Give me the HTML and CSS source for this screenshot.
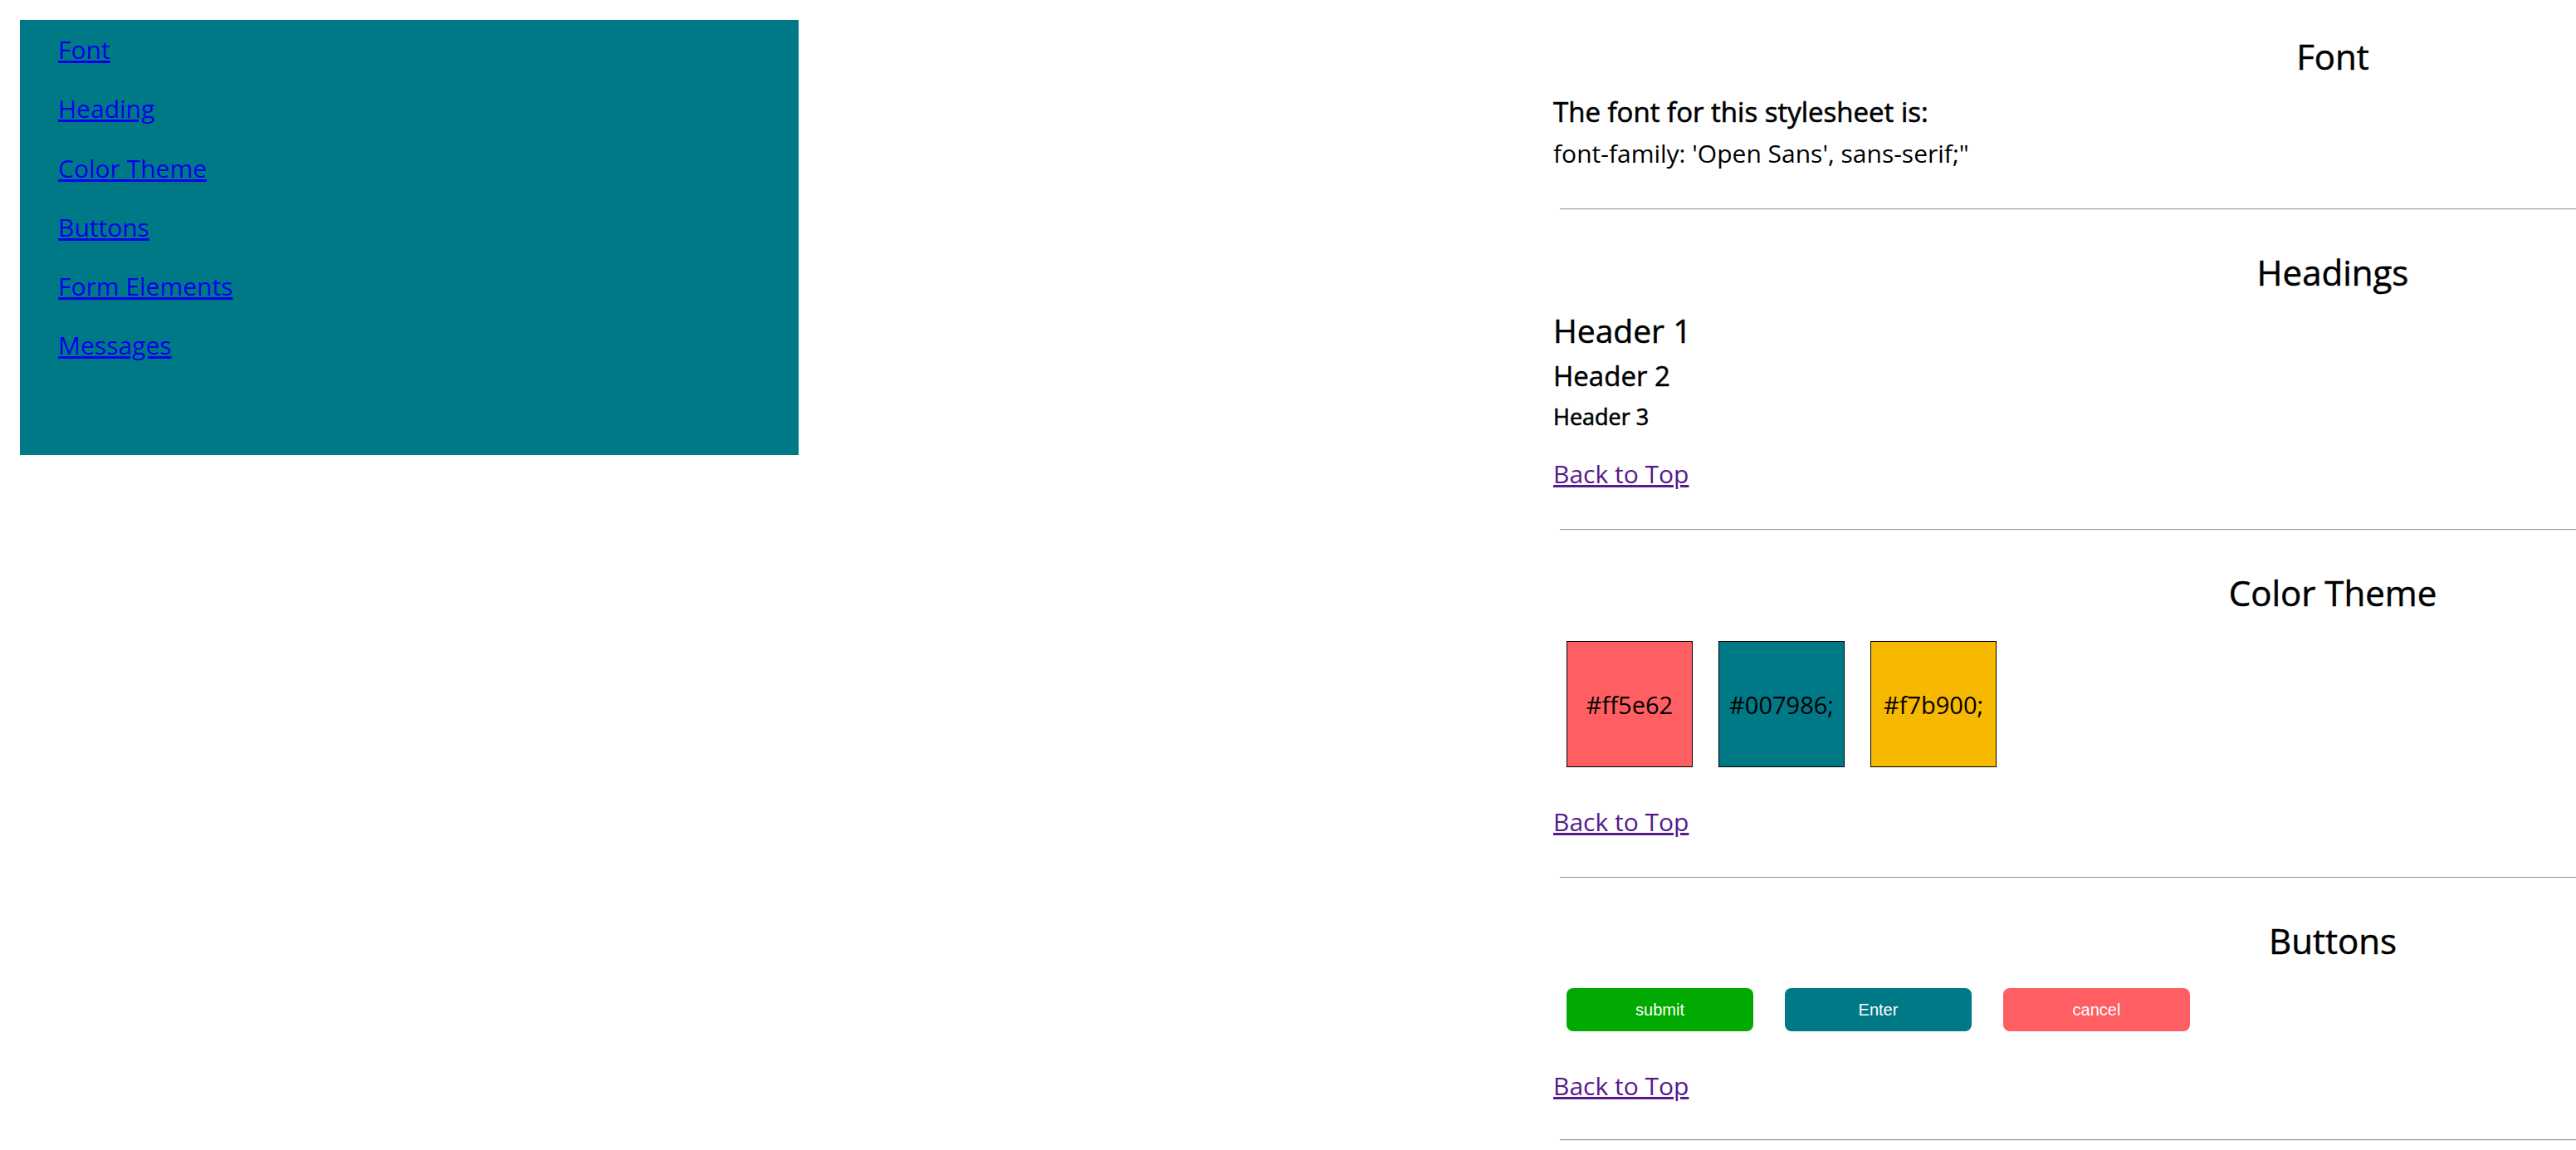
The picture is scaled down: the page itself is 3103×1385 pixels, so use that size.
FILE: index.html
```html
<!DOCTYPE html>
<html lang="en">
<head>
<meta charset="utf-8">
<title>Style Guide</title>
<link rel="stylesheet" href="styles.css">
</head>
<body>
<div class="page">
  <nav class="sidebar">
    <ul class="nav-list">
      <li><a class="nav-link" href="#font">Font</a></li>
      <li><a class="nav-link" href="#headings">Heading</a></li>
      <li><a class="nav-link" href="#colors">Color Theme</a></li>
      <li><a class="nav-link" href="#buttons">Buttons</a></li>
      <li><a class="nav-link" href="#forms">Form Elements</a></li>
      <li><a class="nav-link" href="#messages">Messages</a></li>
    </ul>
  </nav>
  <main class="content">
    <section class="section section-font" id="font">
      <h2 class="section-title">Font</h2>
      <h3 class="font-lead">The font for this stylesheet is:</h3>
      <p class="font-desc">font-family: 'Open Sans', sans-serif;"</p>
      <hr class="divider">
    </section>

    <section class="section" id="headings">
      <h2 class="section-title">Headings</h2>
      <h1 class="sample-h1">Header 1</h1>
      <h2 class="sample-h2">Header 2</h2>
      <h3 class="sample-h3">Header 3</h3>
      <a class="back-link" href="#top">Back to Top</a>
      <hr class="divider">
    </section>

    <section class="section" id="colors">
      <h2 class="section-title">Color Theme</h2>
      <div class="swatches">
        <div class="swatch swatch-red">#ff5e62</div>
        <div class="swatch swatch-teal">#007986;</div>
        <div class="swatch swatch-yellow">#f7b900;</div>
      </div>
      <a class="back-link back-after-block" href="#top">Back to Top</a>
      <hr class="divider">
    </section>

    <section class="section" id="buttons">
      <h2 class="section-title">Buttons</h2>
      <div class="button-row">
        <button class="btn btn-submit" type="button">submit</button>
        <button class="btn btn-enter" type="button">Enter</button>
        <button class="btn btn-cancel" type="button">cancel</button>
      </div>
      <a class="back-link back-after-block" href="#top">Back to Top</a>
      <hr class="divider divider-last">
    </section>
  </main>
</div>
</body>
</html>
```

FILE: styles.css
```css
html {
  overflow: hidden;
}

body {
  margin: 0;
  font-family: "Open Sans", "Noto Sans", sans-serif;
  color: #000;
  background: #fff;
}

.page {
  display: flex;
  align-items: flex-start;
  padding: 24px 0 0 24px;
  gap: 909px;
}

.sidebar {
  flex: 0 0 938px;
  width: 938px;
  height: 524px;
  background: #007986;
  box-sizing: border-box;
  padding-left: 46px;
}

.nav-list {
  list-style: none;
  margin: 0;
  padding: 0;
}

.nav-list li {
  line-height: 71.3px;
  font-size: 30px;
}

.nav-link {
  color: #0000ee;
}

.content {
  flex: 0 0 1878px;
  width: 1878px;
  margin-top: 14.5px;
  display: flex;
  flex-direction: column;
  align-items: flex-start;
}

.section {
  width: 100%;
  display: flex;
  flex-direction: column;
  align-items: flex-start;
}

.section-title {
  align-self: stretch;
  text-align: center;
  font-size: 42px;
  line-height: 57px;
  font-weight: 400;
  -webkit-text-stroke: 0.5px #000;
  margin: 46px 0 0;
}

.section-font .section-title {
  margin-top: 0;
}

.font-lead {
  font-size: 33px;
  line-height: 45px;
  font-weight: 400;
  -webkit-text-stroke: 0.6px #000;
  margin: 16px 0 0;
}

.font-desc {
  font-size: 30px;
  line-height: 41px;
  margin: 7px 0 0;
}

.divider {
  align-self: stretch;
  height: 0;
  margin: 46px 0 0 8px;
  border: 0;
  border-top: 1px solid #9a9a9a;
  border-bottom: 1px solid #eeeeee;
}

.divider-last {
  margin-top: 44px;
}

.sample-h1 {
  font-size: 39px;
  line-height: 53px;
  font-weight: 400;
  -webkit-text-stroke: 0.5px #000;
  margin: 15px 0 0;
}

.sample-h2 {
  font-size: 33px;
  line-height: 45px;
  font-weight: 400;
  -webkit-text-stroke: 0.5px #000;
  margin: 6px 0 0;
}

.sample-h3 {
  font-size: 27px;
  line-height: 35px;
  font-weight: 400;
  -webkit-text-stroke: 0.6px #000;
  margin: 9px 0 0;
}

.back-link {
  font-size: 30px;
  line-height: 41px;
  color: #551a8b;
  margin-top: 31px;
}

.back-after-block {
  margin-top: 45px;
}

.swatches {
  display: flex;
  gap: 31px;
  margin: 30.5px 0 0 16px;
}

.swatch {
  width: 152px;
  height: 152px;
  box-sizing: border-box;
  border: 1px solid #000;
  display: flex;
  align-items: center;
  justify-content: center;
  font-size: 29px;
}

.swatch-red {
  background: #ff5e62;
}

.swatch-teal {
  background: #007986;
}

.swatch-yellow {
  background: #f7b900;
}

.button-row {
  display: flex;
  gap: 38px;
  margin: 29px 0 0 16px;
}

.btn {
  width: 225px;
  height: 52px;
  border: 0;
  border-radius: 8px;
  color: #fff;
  font-family: "Liberation Sans", Arial, sans-serif;
  font-size: 20px;
  padding: 0;
}

.btn-submit {
  background: #00aa00;
}

.btn-enter {
  background: #007986;
}

.btn-cancel {
  background: #ff5e62;
}
```
